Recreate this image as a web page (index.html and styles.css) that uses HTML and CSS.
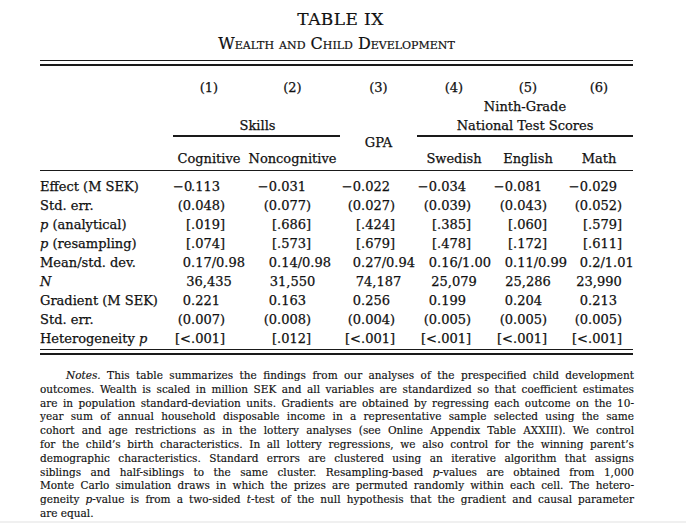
FILE: index.html
```html
<!DOCTYPE html>
<html>
<head>
<meta charset="utf-8">
<link rel="stylesheet" href="styles.css">
</head>
<body>
<div class="page">
  <div class="title">TABLE IX</div>
  <div class="subtitle">Wealth and Child Development</div>
  <div class="toprule"></div>

  <div class="head grid">
    <div class="hn c1">(1)</div>
    <div class="hn c2">(2)</div>
    <div class="hn c3">(3)</div>
    <div class="hn c4">(4)</div>
    <div class="hn c5">(5)</div>
    <div class="hn c6">(6)</div>
    <div class="h-ninth">Ninth-Grade</div>
    <div class="h-skills">Skills</div>
    <div class="h-gpa">GPA</div>
    <div class="h-national">National Test Scores</div>
    <div class="hs c1">Cognitive</div>
    <div class="hs c2">Noncognitive</div>
    <div class="hs c4">Swedish</div>
    <div class="hs c5">English</div>
    <div class="hs c6">Math</div>
  </div>

  <div class="body">
    <div class="row grid">
      <div class="lbl">Effect (M SEK)</div>
      <div class="v c1"><span class="i">−0</span><span>.113</span></div>
      <div class="v c2"><span class="i">−0</span><span>.031</span></div>
      <div class="v c3"><span class="i">−0</span><span>.022</span></div>
      <div class="v c4"><span class="i">−0</span><span>.034</span></div>
      <div class="v c5"><span class="i">−0</span><span>.081</span></div>
      <div class="v c6"><span class="i">−0</span><span>.029</span></div>
    </div>
    <div class="row grid">
      <div class="lbl">Std. err.</div>
      <div class="v c1"><span class="i">(0</span><span>.048)</span></div>
      <div class="v c2"><span class="i">(0</span><span>.077)</span></div>
      <div class="v c3"><span class="i">(0</span><span>.027)</span></div>
      <div class="v c4"><span class="i">(0</span><span>.039)</span></div>
      <div class="v c5"><span class="i">(0</span><span>.043)</span></div>
      <div class="v c6"><span class="i">(0</span><span>.052)</span></div>
    </div>
    <div class="row grid">
      <div class="lbl"><i>p</i> (analytical)</div>
      <div class="v c1"><span class="i">[</span><span>.019]</span></div>
      <div class="v c2"><span class="i">[</span><span>.686]</span></div>
      <div class="v c3"><span class="i">[</span><span>.424]</span></div>
      <div class="v c4"><span class="i">[</span><span>.385]</span></div>
      <div class="v c5"><span class="i">[</span><span>.060]</span></div>
      <div class="v c6"><span class="i">[</span><span>.579]</span></div>
    </div>
    <div class="row grid">
      <div class="lbl"><i>p</i> (resampling)</div>
      <div class="v c1"><span class="i">[</span><span>.074]</span></div>
      <div class="v c2"><span class="i">[</span><span>.573]</span></div>
      <div class="v c3"><span class="i">[</span><span>.679]</span></div>
      <div class="v c4"><span class="i">[</span><span>.478]</span></div>
      <div class="v c5"><span class="i">[</span><span>.172]</span></div>
      <div class="v c6"><span class="i">[</span><span>.611]</span></div>
    </div>
    <div class="row grid">
      <div class="lbl">Mean/std. dev.</div>
      <div class="v c1"><span class="i">0</span><span>.17/0.98</span></div>
      <div class="v c2"><span class="i">0</span><span>.14/0.98</span></div>
      <div class="v c3"><span class="i">0</span><span>.27/0.94</span></div>
      <div class="v c4"><span class="i">0</span><span>.16/1.00</span></div>
      <div class="v c5"><span class="i">0</span><span>.11/0.99</span></div>
      <div class="v c6"><span class="i">0</span><span>.2/1.01</span></div>
    </div>
    <div class="row grid">
      <div class="lbl"><i>N</i></div>
      <div class="v ctr c1">36,435</div>
      <div class="v ctr c2">31,550</div>
      <div class="v ctr c3">74,187</div>
      <div class="v ctr c4">25,079</div>
      <div class="v ctr c5">25,286</div>
      <div class="v ctr c6">23,990</div>
    </div>
    <div class="row grid">
      <div class="lbl">Gradient (M SEK)</div>
      <div class="v c1"><span class="i">0</span><span>.221</span></div>
      <div class="v c2"><span class="i">0</span><span>.163</span></div>
      <div class="v c3"><span class="i">0</span><span>.256</span></div>
      <div class="v c4"><span class="i">0</span><span>.199</span></div>
      <div class="v c5"><span class="i">0</span><span>.204</span></div>
      <div class="v c6"><span class="i">0</span><span>.213</span></div>
    </div>
    <div class="row grid">
      <div class="lbl">Std. err.</div>
      <div class="v c1"><span class="i">(0</span><span>.007)</span></div>
      <div class="v c2"><span class="i">(0</span><span>.008)</span></div>
      <div class="v c3"><span class="i">(0</span><span>.004)</span></div>
      <div class="v c4"><span class="i">(0</span><span>.005)</span></div>
      <div class="v c5"><span class="i">(0</span><span>.005)</span></div>
      <div class="v c6"><span class="i">(0</span><span>.005)</span></div>
    </div>
    <div class="row grid">
      <div class="lbl">Heterogeneity <i>p</i></div>
      <div class="v c1"><span class="i">[&lt;</span><span>.001]</span></div>
      <div class="v c2"><span class="i">[</span><span>.012]</span></div>
      <div class="v c3"><span class="i">[&lt;</span><span>.001]</span></div>
      <div class="v c4"><span class="i">[&lt;</span><span>.001]</span></div>
      <div class="v c5"><span class="i">[&lt;</span><span>.001]</span></div>
      <div class="v c6"><span class="i">[&lt;</span><span>.001]</span></div>
    </div>
  </div>
  <div class="botrule"></div>

  <div class="notes">
    <span class="ln first"><i>Notes.</i> This table summarizes the findings from our analyses of the prespecified child development</span>
    <span class="ln">outcomes. Wealth is scaled in million SEK and all variables are standardized so that coefficient estimates</span>
    <span class="ln">are in population standard-deviation units. Gradients are obtained by regressing each outcome on the 10-</span>
    <span class="ln">year sum of annual household disposable income in a representative sample selected using the same</span>
    <span class="ln">cohort and age restrictions as in the lottery analyses (see Online Appendix Table AXXIII). We control</span>
    <span class="ln">for the child’s birth characteristics. In all lottery regressions, we also control for the winning parent’s</span>
    <span class="ln">demographic characteristics. Standard errors are clustered using an iterative algorithm that assigns</span>
    <span class="ln">siblings and half-siblings to the same cluster. Resampling-based <i>p</i>-values are obtained from 1,000</span>
    <span class="ln">Monte Carlo simulation draws in which the prizes are permuted randomly within each cell. The hetero-</span>
    <span class="ln">geneity <i>p</i>-value is from a two-sided <i>t</i>-test of the null hypothesis that the gradient and causal parameter</span>
    <span class="ln last">are equal.</span>
  </div>
</div>
<div class="footer-band"></div>
</body>
</html>
```

FILE: styles.css
```css
html, body {
  margin: 0;
  padding: 0;
  background: #ffffff;
}
body {
  font-family: "DejaVu Serif", "Liberation Serif", serif;
  color: #111111;
  height: 523px;
  overflow: hidden;
  display: flex;
  flex-direction: column;
}
.page {
  width: 593px;
  margin-left: 40px;
  flex: 1;
}
.title {
  text-align: center;
  font-size: 17px;
  line-height: 20px;
  margin-top: 9px;
  padding-left: 8px;
  letter-spacing: 0.4px;
  -webkit-text-stroke: 0.2px #111111;
}
.subtitle {
  text-align: center;
  font-size: 16px;
  line-height: 18px;
  margin-top: 6px;
  font-variant: small-caps;
  -webkit-text-stroke: 0.2px #111111;
}
.toprule {
  margin-top: 7px;
  height: 3px;
  border-top: 1px solid #1a1a1a;
  border-bottom: 2px solid #1a1a1a;
}
.grid {
  display: grid;
  grid-template-columns: 133px 72px 95px 77px 74px 74px 68px;
}
.head {
  font-size: 13px;
  line-height: 19px;
  padding-top: 12px;
  padding-bottom: 2px;
  border-bottom: 1px solid #1a1a1a;
  grid-template-rows: 19px 19px 21px 31px;
  text-align: center;
  -webkit-text-stroke: 0.25px #111111;
}
.hn { grid-row: 1; }
.c1 { grid-column: 2; }
.c2 { grid-column: 3; }
.c3 { grid-column: 4; }
.c4 { grid-column: 5; }
.c5 { grid-column: 6; }
.c6 { grid-column: 7; }
.h-ninth { grid-row: 2; grid-column: 5 / 8; }
.h-skills {
  grid-row: 3;
  grid-column: 2 / 4;
  border-bottom: 2px solid #1a1a1a;
  padding-left: 2px;
}
.h-national {
  grid-row: 3;
  grid-column: 5 / 8;
  border-bottom: 2px solid #1a1a1a;
}
.h-gpa {
  grid-row: 3 / 5;
  grid-column: 4;
  align-self: center;
}
.hs {
  grid-row: 4;
  align-self: end;
  white-space: nowrap;
}
.body {
  font-size: 13px;
  line-height: 19px;
  padding-top: 6px;
  -webkit-text-stroke: 0.25px #111111;
}
.row { height: 19px; }
.lbl {
  grid-column: 1;
  white-space: nowrap;
}
.v {
  display: flex;
  white-space: nowrap;
}
.v .i {
  display: inline-block;
  text-align: right;
  width: var(--d);
  flex: none;
}
.v.ctr { justify-content: center; }
.body .c1 { --d: 18px; }
.body .c2 { --d: 32px; }
.body .c3 { --d: 21px; }
.body .c4 { --d: 20px; }
.body .c5 { --d: 22px; }
.body .c6 { --d: 23px; }
.botrule {
  margin-top: 1px;
  height: 3px;
  border-top: 1px solid #1a1a1a;
  border-bottom: 2px solid #1a1a1a;
}
.notes {
  margin-top: 14px;
  font-size: 10.5px;
  line-height: 13.8px;
  width: 594px;
  -webkit-text-stroke: 0.15px #111111;
}
.ln {
  display: block;
  text-align: justify;
  text-align-last: justify;
}
.ln.first { text-indent: 26px; }
.ln.last { text-align-last: left; }
.footer-band {
  height: 3px;
  background: #f0f0f0;
}
```
